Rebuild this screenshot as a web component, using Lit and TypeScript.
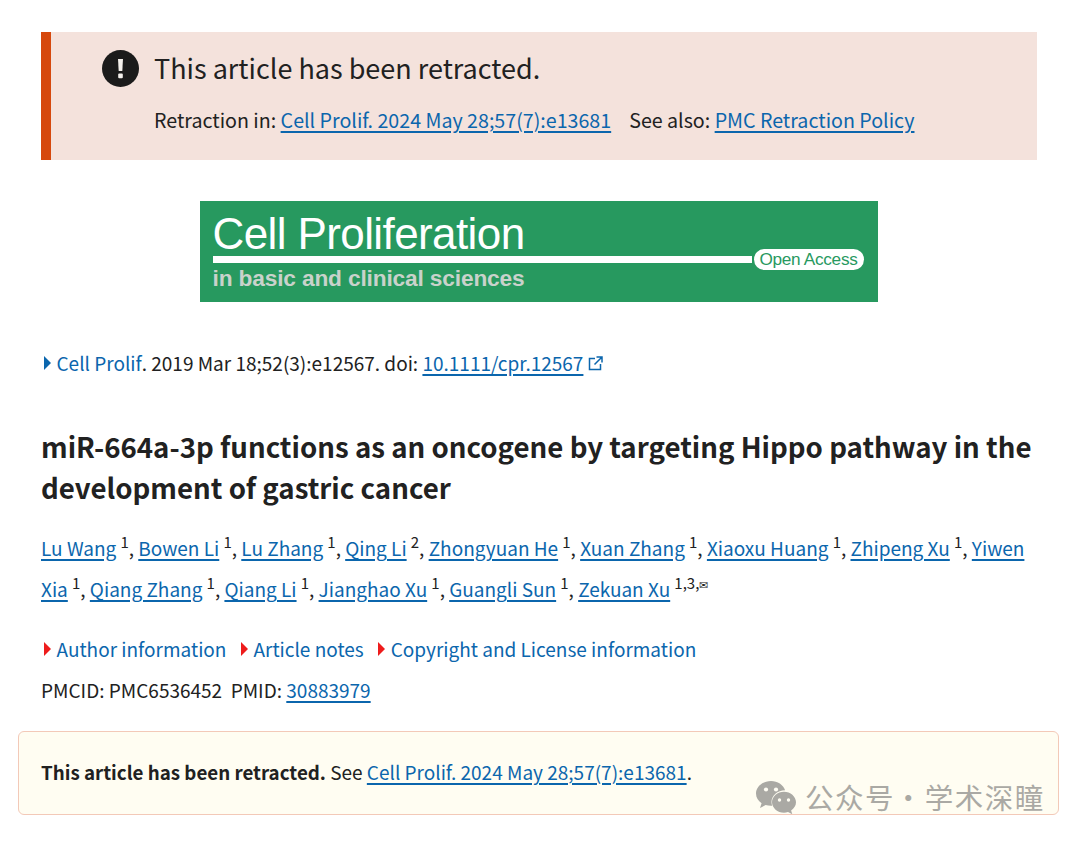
import { LitElement, html, css } from "lit";
import { customElement } from "lit/decorators.js";

const authors1: [string, string][] = [["Lu Wang","1"],["Bowen Li","1"],["Lu Zhang","1"],["Qing Li","2"],["Zhongyuan He","1"],["Xuan Zhang","1"],["Xiaoxu Huang","1"],["Zhipeng Xu","1"],["Yiwen Xia","1"],["Qiang Zhang","1"],["Qiang Li","1"],["Jianghao Xu","1"],["Guangli Sun","1"]];

@customElement("app-root")
export class AppRoot extends LitElement {
  static styles = css`
    :host { display: block; width: 1080px; height: 841px; position: relative; overflow: hidden; background: #fff;
      font-family: "Noto Sans CJK SC", "Noto Sans", sans-serif; font-size: 19px; color: #212121; line-height: 30px; }
    a { color: #0b66ad; text-decoration: underline; text-underline-offset: 3px; text-decoration-thickness: 1.5px; }
    a.plain { text-decoration: none; }
    .page { display: flex; flex-direction: column; padding: 32px 43px 0 41px; }
    .banner { height: 128px; box-sizing: border-box; background: #f4e2dc; border-left: 10px solid #d6480d;
      padding: 16px 0 0 51px; display: flex; flex-direction: column; }
    .banner-head { display: flex; align-items: center; gap: 15px; height: 40px; font-size: 27px; color: #212121; }
    .banner-head svg { width: 37px; height: 37px; flex: none; }
    .banner-sub { margin: 17px 0 0 52px; height: 30px; font-size: 19.65px; }
    .banner-sub .gap { margin-left: 18px; }
    .logo { align-self: center; width: 678px; height: 101px; margin: 41px 0 0 -1px; background: #27995f; position: relative; overflow: hidden;
      font-family: "Liberation Sans", sans-serif; color: #fff; }
    .logo .t1 { position: absolute; left: 13px; top: 6px; font-size: 44px; line-height: 54px; letter-spacing: -0.6px; white-space: nowrap; }
    .logo .rule { position: absolute; left: 13px; top: 55px; width: 539px; height: 7px; background: #fff; }
    .logo .pill { position: absolute; left: 554px; top: 48px; width: 110px; height: 21px; border-radius: 11px; background: #fff; color: #27995f;
      font-size: 17.2px; line-height: 21px; text-align: center; letter-spacing: -0.3px; white-space: nowrap; }
    .logo .t2 { position: absolute; left: 13px; top: 64px; font-size: 22.7px; line-height: 26px; font-weight: 700; color: #c9d2cb; white-space: nowrap; letter-spacing: -0.15px; }
    .cite { margin-top: 46px; height: 30px; display: flex; align-items: center; white-space: pre; }
    .tri { width: 0; height: 0; border-left: 7px solid #0b66ad; border-top: 7px solid transparent; border-bottom: 7px solid transparent; margin: 0 5.5px 0 3px; flex: none; }
    .tri.red { border-left-color: #ee1c1c; }
    .ext { width: 15px; height: 15px; margin-left: 5px; flex: none; }
    h1 { margin: 48px 0 0; font-size: 27.65px; line-height: 41px; font-weight: 700; color: #212121; }
    .authors { margin: 19px -6px 0 0; line-height: 41px; }
    sup { font-size: 15px; line-height: 0; vertical-align: baseline; position: relative; top: -8px; margin-left: 4.15px; }
    .mail { font-size: 11px; margin-left: 0; }
    .links { display: flex; align-items: center; margin-top: 25px; height: 30px; }
    .links .item { display: flex; align-items: center; margin-right: 11.5px; }
    .ids { margin-top: 11px; height: 30px; white-space: pre; }
    .notice { margin: 26px -22px 0 -23px; height: 84px; box-sizing: border-box; border: 1px solid #f3c9b8; border-radius: 6px; background: #fffdf2;
      padding: 25px 0 0 22px; font-size: 19px; }
    .notice b { font-weight: 700; font-size: 18.75px; }
    .wm { position: absolute; left: 756px; top: 778px; display: flex; align-items: center; gap: 9px; color: #aaa9a4; font-size: 28.5px; line-height: 38px; letter-spacing: 1.5px; white-space: pre; }
    .wm svg { width: 40px; height: 34px; flex: none; }
    .wm .dot { margin: 0 -7px 0 -9px; }
  `;

  private sep(a: [string, string]) {
    return html`<a href="#">${a[0]}</a><sup>${a[1]}</sup>, `;
  }

  render() {
    return html`
      <div class="page">
        <section class="banner">
          <div class="banner-head">
            <svg viewBox="0 0 37 37"><circle cx="18.5" cy="18.5" r="18.5" fill="#1b1b1b"/><path d="M16 9h5l-.7 12h-3.6z" fill="#f4f0ec"/><rect x="16.200" y="23.600" width="4.600" height="4.600" rx="1" fill="#f4f0ec"/></svg>
            <span>This article has been retracted.</span>
          </div>
          <div class="banner-sub">Retraction in: <a href="#">Cell Prolif. 2024 May 28;57(7):e13681</a><span class="gap">See also: </span><a href="#">PMC Retraction Policy</a></div>
        </section>

        <div class="logo">
          <div class="t1">Cell Proliferation</div>
          <div class="rule"></div>
          <div class="pill">Open Access</div>
          <div class="t2">in basic and clinical sciences</div>
        </div>

        <div class="cite"><span class="tri"></span><a class="plain" href="#">Cell Prolif</a>. 2019 Mar 18;52(3):e12567. doi: <a href="#">10.1111/cpr.12567</a><svg class="ext" viewBox="0 0 15 15" fill="none" stroke="#0b66ad" stroke-width="1.5"><path d="M7 2.500H1.500v11h11V8"/><path d="M8.500 1h5.500v5.500M14 1L6.500 8.500"/></svg></div>

        <h1>miR-664a-3p functions as an oncogene by targeting Hippo pathway in the development of gastric cancer</h1>

        <div class="authors">${authors1.map(a => this.sep(a))}<a href="#">Zekuan Xu</a><sup>1,3,<span class="mail">✉</span></sup></div>

        <div class="links">
          <span class="item"><span class="tri red"></span><a class="plain" href="#">Author information</a></span>
          <span class="item"><span class="tri red"></span><a class="plain" href="#">Article notes</a></span>
          <span class="item"><span class="tri red"></span><a class="plain" href="#">Copyright and License information</a></span>
        </div>

        <div class="ids">PMCID: PMC6536452  PMID: <a href="#">30883979</a></div>

        <div class="notice"><b>This article has been retracted.</b> See <a href="#">Cell Prolif. 2024 May 28;57(7):e13681</a>.</div>
      </div>

      <div class="wm">
        <svg viewBox="0 0 40 34" fill="#aaa9a4">
          <path d="M15 1C7 1 0 6.400 0 13.500c0 4 2.200 7.400 5.600 9.700L4 28l5.600-2.900c1.700.4 3.400.7 5.400.7h1.200c-.5-1.200-.7-2.400-.7-3.700 0-6.600 6-11.800 13.600-11.800C27.300 4.700 21.600 1 15 1z"/>
          <path d="M40 22.200c0-5.800-5.600-10.500-12-10.500s-12 4.700-12 10.500 5.600 10.500 12 10.500c1.300 0 2.700-.2 4-.6l4.300 2.100-1.200-3.700c3-2.100 4.900-5 4.900-8.300z"/>
          <circle cx="10" cy="9.500" r="2.100" fill="#fffdf3"/><circle cx="20" cy="9.500" r="2.100" fill="#fffdf3"/>
          <circle cx="23.500" cy="20" r="1.700" fill="#fffdf3"/><circle cx="32.500" cy="20" r="1.700" fill="#fffdf3"/>
        </svg>
        <span>公众号<span class="dot"> · </span>学术深瞳</span>
      </div>
    `;
  }
}
